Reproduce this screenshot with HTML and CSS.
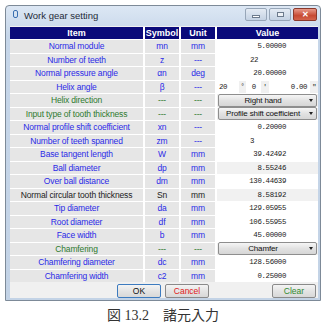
FILE: index.html
```html
<!DOCTYPE html>
<html lang="ja">
<head>
  <meta charset="UTF-8" />
  <title>Work gear setting</title>
  <link rel="stylesheet" href="styles.css">
</head>
<body>
  <div class="window">
    <div class="titlebar">
      <span class="app-icon"></span>
      <span class="title">Work gear setting</span>
      <div class="caption-btns">
        <span class="cbtn"><i class="min"></i></span>
        <span class="cbtn"><i class="max"></i></span>
        <span class="cbtn close">✕</span>
      </div>
    </div>

    <div class="client">
      <div class="grid">
        <div class="hd">Item</div>
        <div class="hd">Symbol</div>
        <div class="hd">Unit</div>
        <div class="hd">Value</div>

        <div class="c blue">Normal module</div><div class="c blue">mn</div><div class="c blue">mm</div>
        <div class="v num">5.00000</div>

        <div class="c blue">Number of teeth</div><div class="c blue">z</div><div class="c blue">---</div>
        <div class="v int">22</div>

        <div class="c blue">Normal pressure angle</div><div class="c blue">αn</div><div class="c blue">deg</div>
        <div class="v num">20.00000</div>

        <div class="c blue">Helix angle</div><div class="c blue">β</div><div class="c blue">---</div>
        <div class="v angle">
          <span class="box b1">20</span><span class="mark">°</span>
          <span class="box b2">0</span><span class="mark">'</span>
          <span class="box b3">0.00</span><span class="mark">"</span>
        </div>

        <div class="c green">Helix direction</div><div class="c green">---</div><div class="c green">---</div>
        <div class="v sel"><span class="drop">Right hand</span></div>

        <div class="c green">Input type of tooth thickness</div><div class="c green">---</div><div class="c green">---</div>
        <div class="v sel"><span class="drop">Profile shift coefficient</span></div>

        <div class="c blue">Normal profile shift coefficient</div><div class="c blue">xn</div><div class="c blue">---</div>
        <div class="v num">0.20000</div>

        <div class="c blue">Number of teeth spanned</div><div class="c blue">zm</div><div class="c blue">---</div>
        <div class="v int">3</div>

        <div class="c blue">Base tangent length</div><div class="c blue">W</div><div class="c blue">mm</div>
        <div class="v num">39.42492</div>

        <div class="c blue">Ball diameter</div><div class="c blue">dp</div><div class="c blue">mm</div>
        <div class="v num ro">8.55246</div>

        <div class="c blue">Over ball distance</div><div class="c blue">dm</div><div class="c blue">mm</div>
        <div class="v num">130.44639</div>

        <div class="c black">Normal circular tooth thickness</div><div class="c black">Sn</div><div class="c black">mm</div>
        <div class="v num ro">8.58192</div>

        <div class="c blue">Tip diameter</div><div class="c blue">da</div><div class="c blue">mm</div>
        <div class="v num">129.05955</div>

        <div class="c blue">Root diameter</div><div class="c blue">df</div><div class="c blue">mm</div>
        <div class="v num">106.55955</div>

        <div class="c blue">Face width</div><div class="c blue">b</div><div class="c blue">mm</div>
        <div class="v num">45.00000</div>

        <div class="c green">Chamfering</div><div class="c green">---</div><div class="c green">---</div>
        <div class="v sel"><span class="drop">Chamfer</span></div>

        <div class="c blue">Chamfering diameter</div><div class="c blue">dc</div><div class="c blue">mm</div>
        <div class="v num">128.56000</div>

        <div class="c blue">Chamfering width</div><div class="c blue">c2</div><div class="c blue">mm</div>
        <div class="v num">0.25000</div>
      </div>

      <div class="buttons">
        <button class="ok">OK</button>
        <button class="cancel">Cancel</button>
        <button class="clear">Clear</button>
      </div>
    </div>
  </div>

  <p class="caption">図 13.2　諸元入力</p>
</body>
</html>
```

FILE: styles.css
```css
body {
  margin: 0;
  background: #ffffff;
  font-family: "Liberation Sans", Arial, sans-serif;
}

.window {
  margin: 5px 0 0 5px;
  width: 314px;
  height: 294px;
  border: 1px solid #7d8a98;
  border-radius: 4px 4px 0 0;
  background: linear-gradient(to bottom, #dce7f4, #c6d6e9 30px, #c3d3e6);
  display: flex;
  flex-direction: column;
}

.titlebar {
  height: 20px;
  display: flex;
  align-items: center;
  padding-left: 7px;
}

.app-icon {
  width: 3px;
  height: 6px;
  border: 1px solid #3a6fb0;
  border-radius: 2px;
  margin-right: 6px;
  margin-top: -3px;
}

.title {
  font-size: 9.5px;
  color: #1e2a38;
}

.caption-btns {
  margin-left: auto;
  margin-right: 3px;
  display: flex;
  gap: 2px;
  margin-top: -2px;
}

.cbtn {
  width: 20px;
  height: 11px;
  border: 1px solid #97a6b8;
  border-radius: 2px;
  background: linear-gradient(to bottom, #e4ebf4, #c4d2e3);
  display: flex;
  align-items: center;
  justify-content: center;
}

.cbtn .min {
  width: 6px;
  height: 1px;
  background: #ffffff;
  border: 1px solid #6c7a8c;
  margin-top: 3px;
}

.cbtn .max {
  width: 5px;
  height: 3px;
  border: 1px solid #6c7a8c;
  background: #eef2f7;
}

.cbtn.close {
  width: 22px;
  background: linear-gradient(to bottom, #e89a8a, #c74a33 60%, #d3644c);
  border-color: #8b3a2c;
  color: #ffffff;
  font-size: 8px;
  font-weight: bold;
}

.client {
  flex: 1;
  margin: 0 2px 2px 4px;
  background: #f0f0f0;
  padding-top: 1px;
  display: flex;
  flex-direction: column;
}

.grid {
  display: grid;
  grid-template-columns: 133px 34px 34px 101px;
  grid-auto-rows: 12.5px;
  column-gap: 2px;
  row-gap: 1px;
  background: #ffffff;
  font-size: 8.5px;
}

.hd {
  background: #0a0a7a;
  color: #ffffff;
  font-weight: bold;
  font-size: 9px;
  display: flex;
  align-items: center;
  justify-content: center;
}

.c {
  background: #e6e6e6;
  display: flex;
  align-items: center;
  justify-content: center;
  white-space: nowrap;
  letter-spacing: -0.15px;
}

.blue { color: #2a2ae6; }
.green { color: #2e7a2e; }
.black { color: #222222; }

.v {
  background: #ffffff;
  display: flex;
  align-items: center;
  font-family: "Liberation Mono", monospace;
  font-size: 7.4px;
  color: #1a1a1a;
  letter-spacing: -0.35px;
}

.v.num {
  justify-content: flex-end;
  padding-right: 32px;
}

.v.int {
  padding-left: 33px;
}

.v.ro {
  background: #f1f1f1;
}

.v.angle {
  background: #f0f0f0;
  gap: 0;
}

.box {
  background: #ffffff;
  height: 12px;
  display: flex;
  align-items: center;
}

.b1 { width: 22px; padding-left: 2px; box-sizing: border-box; }
.b2 { width: 15px; justify-content: center; }
.b3 { width: 42px; justify-content: flex-end; padding-right: 3px; box-sizing: border-box; }

.mark {
  width: 8px;
  text-align: center;
  font-size: 7px;
}

.v.sel {
  background: #f0f0f0;
  padding: 0 1px;
}

.drop {
  flex: 1;
  height: 11px;
  padding-right: 9px;
  border: 1px solid #8e8e8e;
  border-radius: 2px;
  background: linear-gradient(to bottom, #f6f6f6, #e2e2e2 50%, #d6d6d6);
  font-family: "Liberation Sans", Arial, sans-serif;
  font-size: 8px;
  letter-spacing: -0.15px;
  color: #111111;
  display: flex;
  align-items: center;
  justify-content: center;
  position: relative;
}

.drop::after {
  content: "";
  position: absolute;
  right: 3px;
  top: 4px;
  border-left: 2.5px solid transparent;
  border-right: 2.5px solid transparent;
  border-top: 3px solid #222222;
}

.buttons {
  display: flex;
  gap: 4px;
  padding: 2px 2px 0 107px;
}

.buttons button {
  width: 44px;
  height: 14px;
  padding: 0;
  border: 1px solid #8a8a8a;
  border-radius: 2px;
  background: linear-gradient(to bottom, #f4f4f4, #e4e4e4 50%, #d8d8d8);
  font-family: "Liberation Sans", Arial, sans-serif;
  font-size: 8.5px;
}

.buttons .ok {
  border-color: #3d7bbf;
  color: #111111;
}

.buttons .cancel { color: #e02020; }

.buttons .clear {
  margin-left: auto;
  color: #2f8a2f;
}

.caption {
  margin: 3px 0 0 0;
  width: 326px;
  text-align: center;
  font-family: "Liberation Serif", "Noto Sans CJK JP", serif;
  font-size: 14px;
  color: #333333;
}
```
